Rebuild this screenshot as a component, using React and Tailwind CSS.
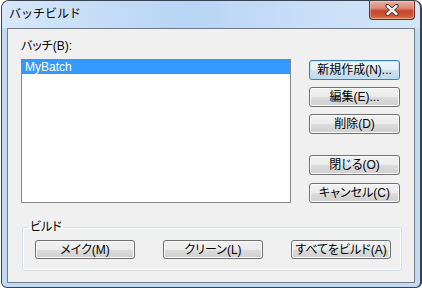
import React from "react";

const font = "font-['Liberation_Sans','Noto_Sans_CJK_JP',sans-serif] [font-feature-settings:'palt']";

function Btn({ children, w = "w-[91px]", h = "h-[20px]", def = false }) {
  const base =
    "flex items-center justify-center whitespace-nowrap rounded-[3px] border text-[12px] leading-[14px] text-black " +
    w +
    " " +
    h;
  const look = def
    ? " border-[#3c7fb1] bg-[linear-gradient(#eef5fa,#e3eef6_50%,#d0e2ee_50%,#c3d8e6)] shadow-[inset_0_0_0_1px_#bfe3f7]"
    : " border-[#707070] bg-[linear-gradient(#f2f2f2,#ebebeb_50%,#dddddd_50%,#cfcfcf)] shadow-[inset_0_0_0_1px_#fcfcfc]";
  return <div className={base + look}>{children}</div>;
}

export default function App() {
  return (
    <div className={"w-[422px] h-[288px] bg-white " + font}>
      <div className="ml-px w-[421px] h-[288px] rounded-t-[8px] rounded-b-[6px] border border-r-2 border-[#39424d] bg-[#c3daf4] flex flex-col overflow-hidden">
        {/* title bar */}
        <div className="h-[27px] flex items-start justify-between bg-[linear-gradient(90deg,#d8e8fa,#c4dcf6_25%,#b8d5f5_45%,#c8ddf7_70%,#d5e6f9)]">
          <div className="pl-[7px] pt-[6px] text-[12px] leading-[14px] text-black [font-feature-settings:normal]">
            バッチビルド
          </div>
          <div className="mr-[5px] w-[46px] h-[19px] rounded-b-[4px] border border-t-0 border-[#6b2a20] bg-[linear-gradient(#eab0a2,#d98a76_40%,#c5442d_55%,#cf5a3c_85%,#e07d5c)] shadow-[inset_0_0_0_1px_rgba(255,220,210,0.45)] flex items-center justify-center">
            <svg width="14" height="12" viewBox="0 0 14 12">
              <path d="M2.5 2 L11.5 10 M11.5 2 L2.5 10" stroke="#4a2a26" strokeWidth="4.2" strokeLinecap="round" />
              <path d="M2.5 2 L11.5 10 M11.5 2 L2.5 10" stroke="#ffffff" strokeWidth="2.4" strokeLinecap="round" />
            </svg>
          </div>
        </div>
        {/* client */}
        <div className="mx-[5px] h-[255px] border border-[#6d7b8a] bg-[#f0f0f0] pt-[10px] pl-[13px]">
          <div className="flex">
            <div className="flex flex-col">
              <div className="h-[14px] text-[12px] leading-[14px] text-black">バッチ(B):</div>
              <div className="mt-[6px] w-[270px] h-[144px] border border-[#828790] bg-white">
                <div className="h-[14px] bg-[#3399ff] text-white text-[12px] leading-[14px] pl-[3px]">
                  MyBatch
                </div>
              </div>
            </div>
            <div className="ml-[18px] mt-[21px] flex flex-col">
              <Btn def>新規作成(N)...</Btn>
              <div className="mt-[7px]">
                <Btn>編集(E)...</Btn>
              </div>
              <div className="mt-[7px]">
                <Btn>削除(D)</Btn>
              </div>
              <div className="mt-[21px]">
                <Btn>閉じる(O)</Btn>
              </div>
              <div className="mt-[8px]">
                <Btn>キャンセル(C)</Btn>
              </div>
            </div>
          </div>
          <fieldset className="mt-[17px] ml-px w-[380px] rounded-[3px] border border-[#d5dfe5] shadow-[inset_0_0_0_1px_#ffffff] pl-[12px] pt-[6px] pb-[11px]">
            <legend className="-ml-[7px] px-[2px] text-[12px] leading-[14px] text-black">ビルド</legend>
            <div className="flex gap-[28px]">
              <Btn w="w-[100px]" h="h-[19px]">メイク(M)</Btn>
              <Btn w="w-[100px]" h="h-[19px]">クリーン(L)</Btn>
              <Btn w="w-[100px]" h="h-[19px]">すべてをビルド(A)</Btn>
            </div>
          </fieldset>
        </div>
      </div>
    </div>
  );
}
